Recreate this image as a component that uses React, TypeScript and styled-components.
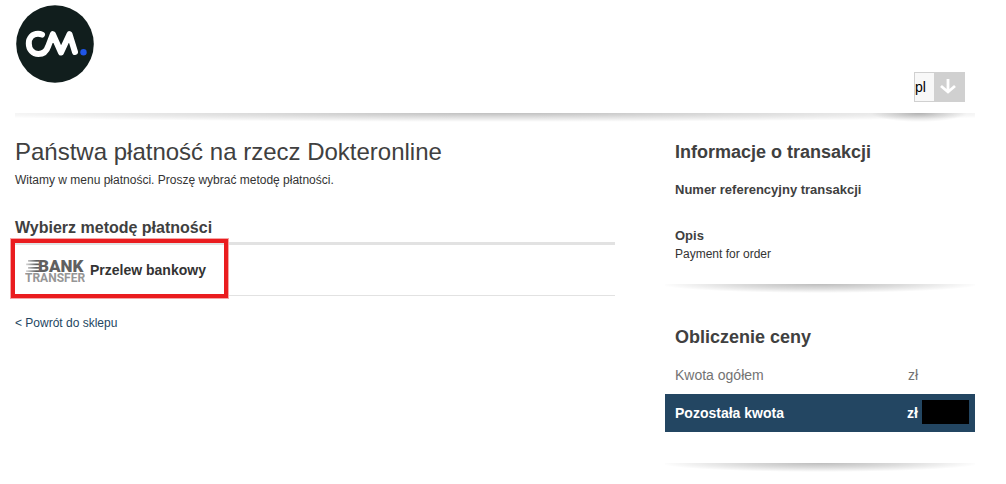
import React from 'react';
import styled, { createGlobalStyle } from 'styled-components';

const GlobalStyle = createGlobalStyle`
  *, *::before, *::after { box-sizing: border-box; }
  body {
    margin: 0;
    background: #fff;
    color: #333;
    font-family: "Liberation Sans", Arial, sans-serif;
    font-size: 12px;
    line-height: 18px;
  }
  h1, h2, h3, p { margin: 0; }
`;

const Page = styled.div`
  padding: 5px 31px 0 15px;
`;

const Header = styled.header`
  display: flex;
  justify-content: space-between;
  align-items: flex-end;
  padding-bottom: 11px;
`;

const LogoLink = styled.a`
  display: block;
  align-self: flex-start;
  height: 78px;
  margin-bottom: 19px;
  padding-left: 1px;
`;

const LanguagePicker = styled.div`
  display: grid;
  grid-template-columns: 1fr 31px;
  width: 51px;
  height: 30px;
  margin-right: 10px;
  background: #d0d0d0;
`;

const LanguageSelect = styled.select`
  grid-area: 1 / 1 / 2 / 3;
  appearance: none;
  height: 30px;
  padding: 0;
  border: 1px solid #d0d0d0;
  border-right: 31px solid #d0d0d0;
  border-radius: 0;
  background: #f8f8f8;
  color: #000;
  font: 14px "Liberation Sans", Arial, sans-serif;
`;

const PickerArrow = styled.svg`
  grid-area: 1 / 2;
  align-self: center;
  justify-self: start;
  margin-left: 5px;
  pointer-events: none;
`;

const Shade = styled.div<{ $wide?: boolean }>`
  height: 9px;
  background: ${({ $wide }) =>
    $wide
      ? `radial-gradient(48px 9px at calc(100% - 56px) 0, rgba(0,0,0,.26), rgba(0,0,0,.12) 50%, transparent),
         radial-gradient(60% 9px at 50% 0, rgba(0,0,0,.25), rgba(0,0,0,.12) 50%, transparent)`
      : 'radial-gradient(52% 9px at 50% 0, rgba(0,0,0,.26), rgba(0,0,0,.14) 50%, transparent)'};
`;

const Columns = styled.div`
  display: grid;
  grid-template-columns: minmax(0, 1fr) 310px;
  gap: 50px;
`;

const Main = styled.main`
  padding-top: 15px;
`;

const PageTitle = styled.h1`
  color: #404040;
  font-size: 24px;
  font-weight: 400;
  line-height: 30px;
`;

const Intro = styled.p`
  padding-top: 4px;
`;

const MethodsTitle = styled.h2`
  margin-top: 29px;
  color: #404040;
  font-size: 16px;
  line-height: 20px;
`;

const MethodList = styled.ul`
  margin: 4px 0 0;
  padding: 0;
  border-top: 3px solid #e2e2e2;
  list-style: none;
`;

const MethodItem = styled.li`
  position: relative;
  border-bottom: 1px solid #e2e2e2;
`;

const MethodButton = styled.button`
  display: flex;
  align-items: center;
  gap: 5px;
  width: 100%;
  height: 50px;
  padding: 0 10px;
  border: 0;
  background: none;
  color: #333;
  font: bold 14px "Liberation Sans", Arial, sans-serif;
  text-align: left;
  cursor: pointer;
`;

const Highlight = styled.span`
  position: absolute;
  inset: -6px auto -3px -4px;
  width: 217px;
  border: 4px solid #ea1c1f;
  outline: 1px solid #f6a5a6;
  pointer-events: none;
`;

const BackLink = styled.a`
  display: inline-block;
  margin-top: 18px;
  color: #234662;
  text-decoration: none;
`;

const Sidebar = styled.aside`
  display: flex;
  flex-direction: column;
  padding-top: 18px;
`;

const Panel = styled.section`
  color: #333;
`;

const PanelBody = styled.div`
  padding: 0 10px;
`;

const PanelTitle = styled.h2`
  padding: 0 10px;
  color: #404040;
  font-size: 18px;
  line-height: 24px;
`;

const Label = styled.h3`
  color: #404040;
  font-size: 13px;
  line-height: 18px;
`;

const Detail = styled.div<{ $space: number }>`
  margin-top: ${({ $space }) => $space}px;
`;

const Prices = styled.table`
  width: 100%;
  margin: 7px 0 31px;
  border-collapse: collapse;
  font-size: 14px;
`;

const PriceRow = styled.tr<{ $total?: boolean }>`
  height: 38px;
  background: ${({ $total }) => ($total ? '#234662' : 'transparent')};
  color: ${({ $total }) => ($total ? '#fff' : '#737373')};
  font-weight: ${({ $total }) => ($total ? 700 : 400)};
`;

const PriceName = styled.th`
  padding: 0 10px;
  font-weight: inherit;
  text-align: left;
`;

const PriceValue = styled.td`
  padding: 0 6px 0 0;
`;

const Amount = styled.div`
  display: flex;
  align-items: center;
  justify-content: flex-end;
  gap: 4px;
`;

const Redacted = styled.span<{ $filled?: boolean }>`
  width: 47px;
  height: 24px;
  margin-bottom: 2px;
  background: ${({ $filled }) => ($filled ? '#000' : 'transparent')};
`;

const BrandLogo = () => (
  <svg width="78" height="78" viewBox="0 0 78 78" role="img" aria-label="CM.">
    <circle cx="39" cy="39" r="38.8" fill="#111e1d" />
    <path
      d="M26 29.600 C24.800 29 23.500 28.800 22 28.800 C16.500 28.800 12.800 33 12.800 38.500 C12.800 44.500 16.800 49 22.400 49 C27.500 49 30.500 46.500 32.300 41 L36.900 29.200 L45 47.500 L53.500 29.200 L59 47"
      fill="none"
      stroke="#fff"
      strokeWidth="6"
      strokeLinecap="round"
      strokeLinejoin="round"
    />
    <circle cx="67.500" cy="47.300" r="3.200" fill="#1f55e8" />
  </svg>
);

const BankTransferLogo = () => (
  <svg width="60" height="32" viewBox="0 0 60 32" aria-hidden="true">
    <defs>
      <linearGradient id="stripe" x1="0" x2="14" y1="0" y2="0" gradientUnits="userSpaceOnUse">
        <stop offset="0" stopColor="#606060" stopOpacity="0.15" />
        <stop offset="0.8" stopColor="#606060" />
      </linearGradient>
    </defs>
    <g fill="url(#stripe)">
      <rect x="3" y="6" width="11" height="1.700" />
      <rect x="1" y="9.500" width="13" height="1.700" />
      <rect x="3" y="13" width="11" height="1.700" />
      <rect x="1" y="16.300" width="13" height="1.700" />
    </g>
    <text x="13" y="18" fontFamily="Roboto, sans-serif" fontWeight="900" fontSize="17" fill="#606060">
      BANK
    </text>
    <text x="0" y="28" fontFamily="Roboto, sans-serif" fontWeight="700" fontSize="12" fill="#969696">
      TRANSFER
    </text>
  </svg>
);

export default function App() {
  return (
    <>
      <GlobalStyle />
      <Page>
        <Header>
          <LogoLink href="#" aria-label="CM.">
            <BrandLogo />
          </LogoLink>
          <LanguagePicker>
            <LanguageSelect aria-label="Język" defaultValue="pl">
              <option value="pl">pl</option>
            </LanguageSelect>
            <PickerArrow width="18" height="18" viewBox="0 0 18 18" aria-hidden="true">
              <path d="M9 1v13M2 8L9 14 16 8" fill="none" stroke="#fff" strokeWidth="2.800" />
            </PickerArrow>
          </LanguagePicker>
        </Header>
        <Shade $wide />
        <Columns>
          <Main>
            <PageTitle>Państwa płatność na rzecz Dokteronline</PageTitle>
            <Intro>Witamy w menu płatności. Proszę wybrać metodę płatności.</Intro>
            <MethodsTitle>Wybierz metodę płatności</MethodsTitle>
            <MethodList>
              <MethodItem>
                <MethodButton type="button">
                  <BankTransferLogo />
                  Przelew bankowy
                </MethodButton>
                <Highlight />
              </MethodItem>
            </MethodList>
            <BackLink href="#">&lt; Powrót do sklepu</BackLink>
          </Main>
          <Sidebar>
            <Panel>
              <PanelTitle>Informacje o transakcji</PanelTitle>
              <PanelBody>
                <Detail $space={17}>
                  <Label>Numer referencyjny transakcji</Label>
                </Detail>
                <Detail $space={28}>
                  <Label>Opis</Label>
                  <p>Payment for order</p>
                </Detail>
              </PanelBody>
            </Panel>
            <Detail $space={21}>
              <Shade />
            </Detail>
            <Detail $space={32}>
              <Panel>
                <PanelTitle>Obliczenie ceny</PanelTitle>
                <Prices>
                  <tbody>
                    <PriceRow>
                      <PriceName scope="row">Kwota ogółem</PriceName>
                      <PriceValue>
                        <Amount>
                          zł <Redacted />
                        </Amount>
                      </PriceValue>
                    </PriceRow>
                    <PriceRow $total>
                      <PriceName scope="row">Pozostała kwota</PriceName>
                      <PriceValue>
                        <Amount>
                          zł <Redacted $filled />
                        </Amount>
                      </PriceValue>
                    </PriceRow>
                  </tbody>
                </Prices>
              </Panel>
              <Shade />
            </Detail>
          </Sidebar>
        </Columns>
      </Page>
    </>
  );
}
